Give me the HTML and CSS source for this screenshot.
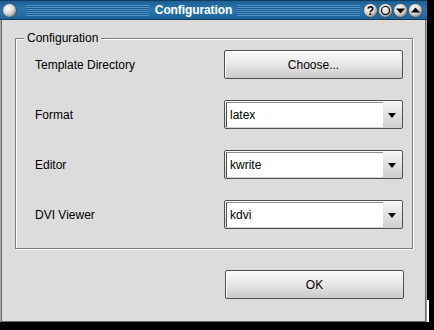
FILE: index.html
```html
<!DOCTYPE html>
<html lang="en">
<head>
    <meta charset="UTF-8">
    <title>Configuration</title>
    <link rel="stylesheet" href="styles.css">
</head>
<body>
    <div class="window">
        <div class="titlebar">
            <svg class="tb-btn" width="15" height="15" viewBox="0 0 15 15">
                <defs>
                    <radialGradient id="ball" cx="0.4" cy="0.35" r="0.65">
                        <stop offset="0" stop-color="#ffffff"/>
                        <stop offset="0.6" stop-color="#d4d4d4"/>
                        <stop offset="1" stop-color="#8a8a8a"/>
                    </radialGradient>
                </defs>
                <circle cx="7.5" cy="7.5" r="7" fill="url(#ball)" stroke="#234a66" stroke-width="0.8"/>
            </svg>
            <div class="stripes"></div>
            <span class="title">Configuration</span>
            <div class="stripes"></div>
            <div class="tb-buttons">
                <svg class="tb-btn" width="15" height="15" viewBox="0 0 15 15">
                    <circle cx="7.5" cy="7.5" r="7" fill="url(#ball)" stroke="#234a66" stroke-width="0.8"/>
                    <text x="7.5" y="12" text-anchor="middle" font-family="Liberation Sans, sans-serif" font-weight="bold" font-size="12" fill="#000">?</text>
                </svg>
                <svg class="tb-btn" width="15" height="15" viewBox="0 0 15 15">
                    <circle cx="7.5" cy="7.5" r="7" fill="url(#ball)" stroke="#234a66" stroke-width="0.8"/>
                    <circle cx="7.5" cy="7.5" r="4" fill="none" stroke="#000" stroke-width="1.2"/>
                </svg>
                <svg class="tb-btn" width="15" height="15" viewBox="0 0 15 15">
                    <circle cx="7.5" cy="7.5" r="7" fill="url(#ball)" stroke="#234a66" stroke-width="0.8"/>
                    <polygon points="3,5.5 12,5.5 7.5,10.5" fill="#000"/>
                </svg>
                <svg class="tb-btn" width="15" height="15" viewBox="0 0 15 15">
                    <circle cx="7.5" cy="7.5" r="7" fill="url(#ball)" stroke="#234a66" stroke-width="0.8"/>
                    <polygon points="3,9.5 12,9.5 7.5,4.5" fill="#000"/>
                </svg>
            </div>
        </div>

        <div class="frame">
            <div class="group">
                <span class="group-title">Configuration</span>
                <div class="row">
                    <span class="label">Template Directory</span>
                    <button class="btn">Choose...</button>
                </div>
                <div class="row">
                    <span class="label">Format</span>
                    <div class="combo"><span class="combo-text">latex</span><span class="combo-arrow"></span></div>
                </div>
                <div class="row">
                    <span class="label">Editor</span>
                    <div class="combo"><span class="combo-text">kwrite</span><span class="combo-arrow"></span></div>
                </div>
                <div class="row">
                    <span class="label">DVI Viewer</span>
                    <div class="combo"><span class="combo-text">kdvi</span><span class="combo-arrow"></span></div>
                </div>
            </div>
            <div class="footer">
                <button class="btn">OK</button>
            </div>
        </div>
        <span class="grip"></span>
    </div>
</body>
</html>
```

FILE: styles.css
```css
body {
    margin: 0;
    background-color: #000;
    font-family: "Liberation Sans", Arial, sans-serif;
    font-size: 12px;
    color: #000;
}
.window {
    position: relative;
    width: 427px;
    height: 322px;
    background-color: #dcdcdc;
    box-sizing: border-box;
    border-left: 1px solid #a8a8a8;
    border-right: 1px solid #a8a8a8;
    border-bottom: 1px solid #a8a8a8;
}
.titlebar {
    display: flex;
    align-items: center;
    height: 18px;
    margin-left: -1px;
    margin-right: -1px;
    padding: 0 4px 0 2px;
    background: linear-gradient(#1d5f92, #2b76b0 50%, #1e6399);
    border-top: 1px solid #0e3c60;
    border-bottom: 1px solid #123a58;
}
.tb-btn {
    display: block;
    flex: none;
}
.stripes {
    flex: 1;
    height: 11px;
    margin: 0 6px 0 9px;
    background: repeating-linear-gradient(#4d95cc 0, #4d95cc 1px, #1c5b8c 1px, #1c5b8c 2px);
}
.stripes + .title + .stripes {
    margin: 0 3px 0 5px;
}
.title {
    color: #fff;
    font-weight: bold;
    font-size: 12px;
    letter-spacing: -0.1px;
}
.tb-buttons {
    display: flex;
    gap: 0;
}
.frame {
    box-sizing: border-box;
    height: 302px;
    padding: 18px 12px 0 13px;
    border-left: 1px solid #6a6a6a;
    border-right: 1px solid #6a6a6a;
    border-bottom: 1px solid #6a6a6a;
}
.group {
    position: relative;
    display: flex;
    flex-direction: column;
    gap: 21px;
    height: 211px;
    box-sizing: border-box;
    padding: 11px 9px 0 19px;
    border: 1px solid #7c7c7c;
    box-shadow: inset 1px 1px 0 #fff, 1px 1px 0 #fff;
}
.group-title {
    position: absolute;
    top: -8px;
    left: 8px;
    padding: 0 3px;
    background-color: #dcdcdc;
    line-height: 14px;
}
.row {
    display: flex;
    align-items: center;
    justify-content: space-between;
    height: 29px;
}
.btn {
    width: 179px;
    height: 29px;
    border: 1px solid #505050;
    border-radius: 2px;
    background: linear-gradient(#fbfbfb, #e4e4e4 55%, #c9c9c9);
    box-shadow: inset 1px 1px 0 #fff;
    font-family: "Liberation Sans", Arial, sans-serif;
    font-size: 12px;
    color: #000;
    padding: 0;
}
.combo {
    display: flex;
    width: 179px;
    height: 29px;
    box-sizing: border-box;
    border: 1px solid #505050;
    border-radius: 2px;
    background: linear-gradient(#fff, #d0d0d0);
    padding: 1px;
}
.combo-text {
    flex: 1;
    display: flex;
    align-items: center;
    padding-left: 3px;
    background-color: #fff;
    border-left: 1px solid #505050;
    border-top: 1px solid #909090;
}
.combo-arrow {
    position: relative;
    width: 18px;
    background: linear-gradient(#f4f4f4, #cfcfcf);
}
.combo-arrow::after {
    content: "";
    position: absolute;
    left: 5px;
    top: 11px;
    border-left: 4px solid transparent;
    border-right: 4px solid transparent;
    border-top: 5px solid #000;
}
.footer {
    display: flex;
    justify-content: flex-end;
    padding: 21px 9px 0 0;
}
.grip {
    position: absolute;
    right: -3px;
    bottom: -5px;
    width: 22px;
    height: 24px;
    border-right: 2px solid #fff;
    border-bottom: 2px solid #fff;
    box-shadow: inset -1px -1px 0 #9a9a9a;
}
```
